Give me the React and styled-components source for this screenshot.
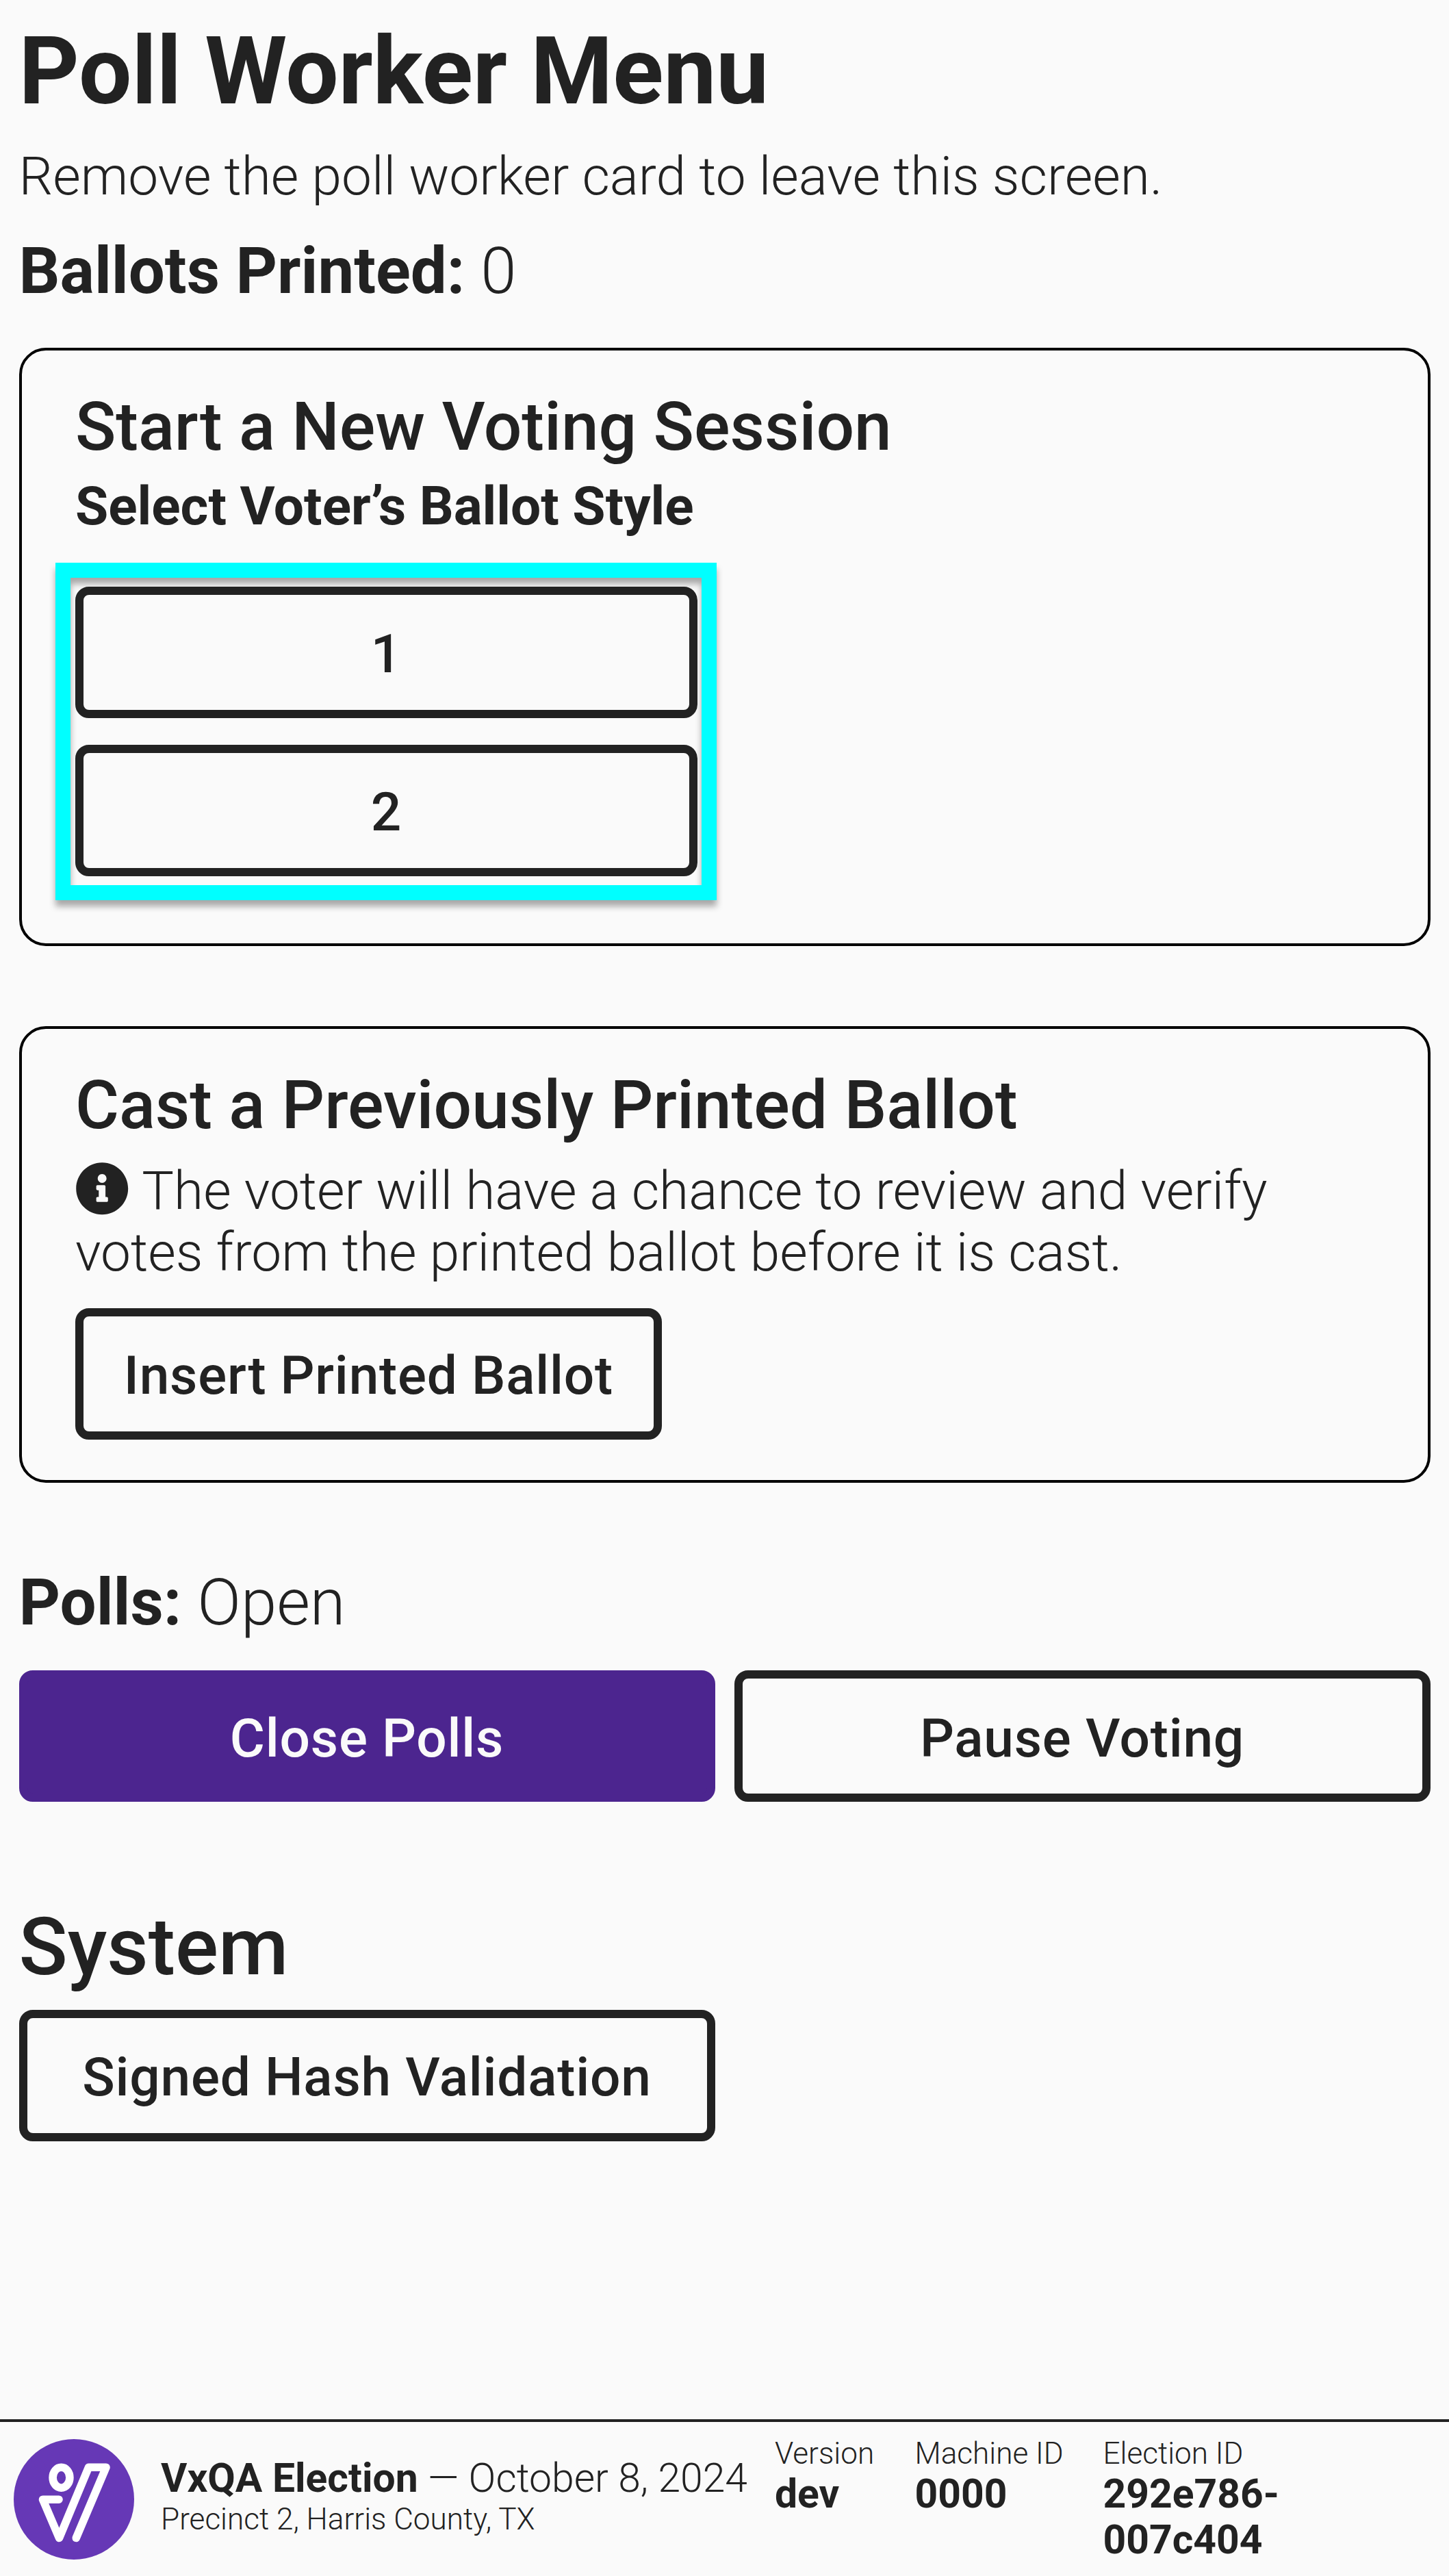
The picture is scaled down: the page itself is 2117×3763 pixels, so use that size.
import React from "react";
import styled, { createGlobalStyle, css } from "styled-components";
import { FaInfoCircle } from "react-icons/fa";

const ink = "#222222";
const paper = "#fafafa";
const brand = "#4c258f";

const GlobalStyle = createGlobalStyle`
  *, *::before, *::after { box-sizing: border-box; }
  html, body { margin: 0; padding: 0; background: ${paper}; }
  body {
    color: ${ink};
    font-family: Roboto, "Noto Sans", sans-serif;
    font-size: 78.4px;
    font-weight: 300;
    line-height: 90.16px;
    -webkit-font-smoothing: antialiased;
  }
  h1, h2, h3, h4, p { margin: 0; }
`;

const Screen = styled.div`
  display: flex;
  flex-direction: column;
  width: 2117px;
  height: 3763px;
  overflow: hidden;
  background: ${paper};
`;

const Main = styled.main`
  flex: 1;
  min-height: 0;
  padding: 23.7px 27.5px 0;
`;

const Title = styled.h1`
  font-size: 137.2px;
  font-weight: 700;
  line-height: 160px;
`;

const Hint = styled.p`
  margin-top: 28.5px;
`;

const StatusLine = styled.p`
  margin-top: ${(p) => p.$gap}px;
  font-size: 94.1px;
  line-height: 110px;
  strong { font-weight: 700; }
`;

const Card = styled.section`
  margin-top: ${(p) => p.$gap}px;
  padding: 56px 78.4px ${(p) => p.$bottom}px;
  border: 4px solid #000;
  border-radius: 39px;
`;

const CardTitle = styled.h2`
  font-size: 98.1px;
  font-weight: 500;
  line-height: 112px;
`;

const CardSubtitle = styled.h3`
  margin-top: 14.5px;
  font-size: 78.4px;
  font-weight: 700;
`;

const CardText = styled.p`
  margin: 22.7px 0 36.8px;
`;

const InfoIcon = styled(FaInfoCircle)`
  width: 78.4px;
  height: 78.4px;
  margin-right: 19px;
  vertical-align: -9.4px;
`;

const Button = styled.button`
  display: flex;
  align-items: center;
  justify-content: center;
  height: 192px;
  padding: 5px 58.8px 0;
  border: 12px solid ${ink};
  border-radius: 20px;
  background: ${paper};
  color: ${ink};
  font: inherit;
  font-weight: 500;
  letter-spacing: 0.01em;
  white-space: nowrap;
  ${(p) =>
    p.$primary &&
    css`
      border-color: ${brand};
      background: ${brand};
      color: ${paper};
    `}
`;

const BallotStyles = styled.div`
  position: relative;
  display: grid;
  gap: 39px;
  width: 909px;
  margin-top: 72.5px;
`;

const Highlight = styled.div`
  position: absolute;
  inset: -35px -28.5px;
  border: 22px solid #00ffff;
  filter: drop-shadow(0 9px 5px rgba(0, 0, 0, 0.33));
  pointer-events: none;
`;

const ButtonGrid = styled.div`
  display: grid;
  grid-template-columns: 1fr 1fr;
  gap: 28px;
  margin-top: ${(p) => p.$gap}px;
`;

const SectionTitle = styled.h2`
  margin-top: 145px;
  font-size: 117.6px;
  font-weight: 500;
  line-height: 135px;
`;

const Footer = styled.footer`
  display: flex;
  align-items: flex-start;
  height: 229.5px;
  border-top: 4px solid ${ink};
  padding-left: 19.6px;
  font-size: 58.8px;
  line-height: 67px;
`;

const Logo = styled.svg`
  flex: none;
  width: 176px;
  height: 176px;
  margin-top: 25.5px;
`;

const ElectionInfo = styled.div`
  display: flex;
  flex-direction: column;
  gap: 2px;
  width: 897px;
  margin: 48px 0 0 39.4px;
  white-space: nowrap;
  strong { font-weight: 700; }
`;

const Small = styled.div`
  font-size: 44.1px;
  line-height: 50px;
`;

const Meta = styled.div`
  width: ${(p) => p.$width}px;
  margin-top: 21px;
  strong {
    display: block;
    font-weight: 700;
  }
`;

function VoteLogo() {
  return (
    <Logo viewBox="0 0 176 176" fill="none">
      <circle cx="88" cy="88" r="88" fill="#6638b6" />
      <g stroke="#fff" strokeWidth="11.6" strokeLinecap="round" strokeLinejoin="round">
        <ellipse cx="69.5" cy="56.2" rx="12.4" ry="15" />
        <path d="M66 88.2H42.500L66.500 144.500L109.500 41.200H135L91.200 144.500" />
      </g>
    </Logo>
  );
}

export default function App() {
  return (
    <>
      <GlobalStyle />
      <Screen>
        <Main>
          <Title>Poll Worker Menu</Title>
          <Hint>Remove the poll worker card to leave this screen.</Hint>
          <StatusLine $gap={39}>
            <strong>Ballots Printed:</strong> 0
          </StatusLine>
          <Card $gap={56.5} $bottom={98}>
            <CardTitle>Start a New Voting Session</CardTitle>
            <CardSubtitle>Select Voter’s Ballot Style</CardSubtitle>
            <BallotStyles>
              <Button>1</Button>
              <Button>2</Button>
              <Highlight />
            </BallotStyles>
          </Card>
          <Card $gap={117.2} $bottom={59}>
            <CardTitle>Cast a Previously Printed Ballot</CardTitle>
            <CardText>
              <InfoIcon />
              The voter will have a chance to review and verify votes from the printed ballot before it is cast.
            </CardText>
            <Button>Insert Printed Ballot</Button>
          </Card>
          <StatusLine $gap={120.3}>
            <strong>Polls:</strong> Open
          </StatusLine>
          <ButtonGrid $gap={44.2}>
            <Button $primary>Close Polls</Button>
            <Button>Pause Voting</Button>
          </ButtonGrid>
          <SectionTitle>System</SectionTitle>
          <ButtonGrid $gap={23.2}>
            <Button>Signed Hash Validation</Button>
          </ButtonGrid>
        </Main>
        <Footer>
          <VoteLogo />
          <ElectionInfo>
            <div>
              <strong>VxQA Election</strong> — October 8, 2024
            </div>
            <Small>Precinct 2, Harris County, TX</Small>
          </ElectionInfo>
          <Meta $width={204.5}>
            <Small>Version</Small>
            <strong>dev</strong>
          </Meta>
          <Meta $width={275}>
            <Small>Machine ID</Small>
            <strong>0000</strong>
          </Meta>
          <Meta $width={300}>
            <Small>Election ID</Small>
            <strong>292e786-007c404</strong>
          </Meta>
        </Footer>
      </Screen>
    </>
  );
}
